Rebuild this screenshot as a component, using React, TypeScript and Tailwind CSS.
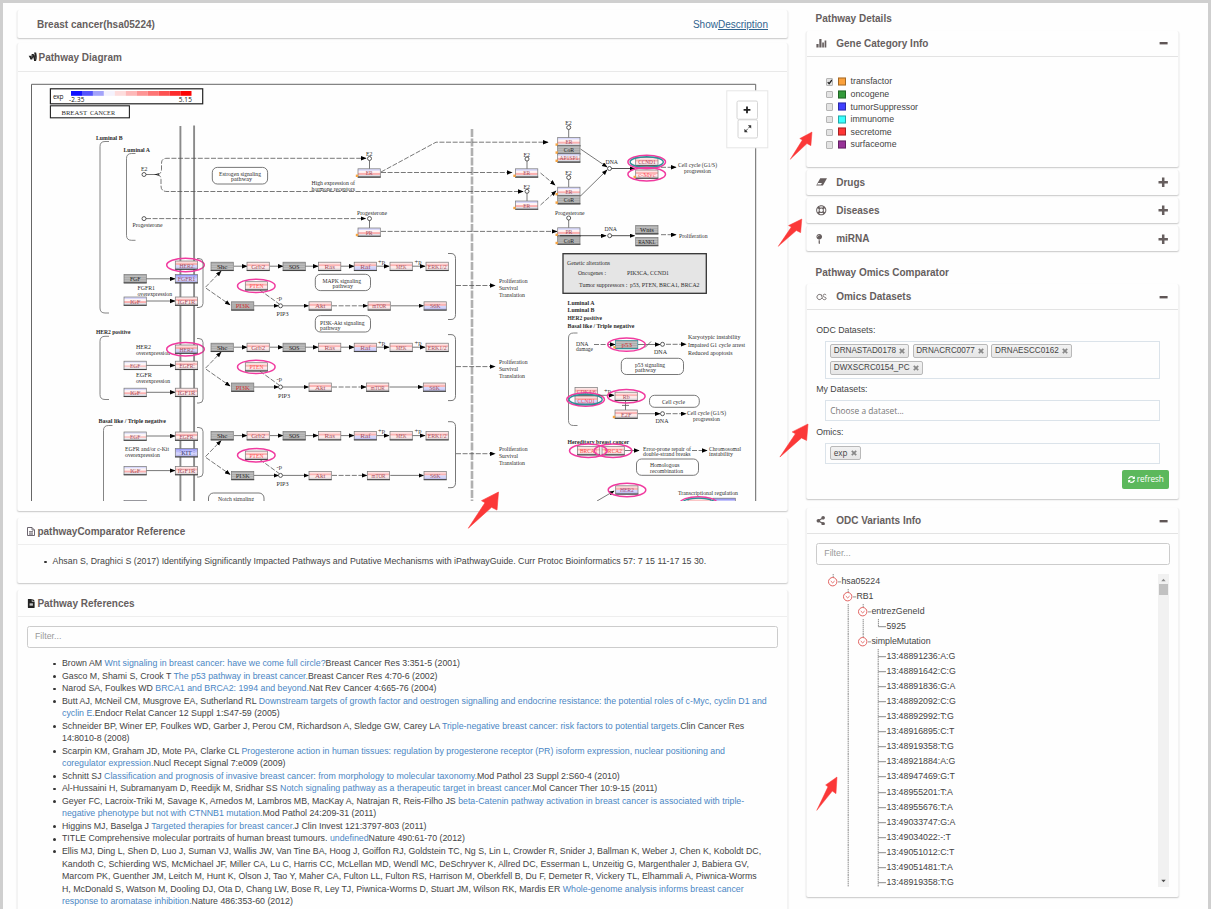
import React from "react";
import {
  FaGoogleWallet,
  FaRegLifeRing,
  FaMapPin,
  FaShareAlt,
  FaSyncAlt,
  FaFileAlt,
} from "react-icons/fa";

const SERIF = "Liberation Serif, serif";

/* ---------- diagram primitives ---------- */

type TProps = { x: number; x2: number; y: number; s: string; b?: boolean; c?: string; size?: number };
function T({ x, x2, y, s, b, c = "#2c2c2c", size = 6.5 }: TProps) {
  return (
    <text
      x={x}
      y={y}
      fontSize={size}
      fontFamily={SERIF}
      fontWeight={b ? 700 : 400}
      fill={c}
      textLength={x2 - x}
      lengthAdjust="spacingAndGlyphs"
    >
      {s}
    </text>
  );
}

type Kind = "red" | "mix" | "blue" | "gray" | "pale" | "low";
const BANDS: Record<Kind, [string, string, string, string]> = {
  red: ["#fde4e4", "#fbb4b4", "#ffe9e9", "#e2d8da"],
  mix: ["#d8d8fa", "#fff4f4", "#fbb0b0", "#dcdce4"],
  low: ["#fbdada", "#fab4b4", "#d4d4fb", "#c2c2ee"],
  blue: ["#9c9cf6", "#b9b9fb", "#d2d2fb", "#b8b8ec"],
  gray: ["#adadad", "#adadad", "#adadad", "#adadad"],
  pale: ["#e4e4f8", "#fdf6f6", "#fbc8c8", "#e8e8ee"],
};

type GProps = { x: number; y: number; s: string; k?: Kind; c?: string; dot?: boolean; edge?: string };
function G({ x, y, s, k = "red", c, dot, edge = "#777" }: GProps) {
  const bands = BANDS[k];
  const color = c || (k === "gray" ? "#222" : "#a35060");
  const w = Math.min(19, 3.5 * s.length);
  return (
    <g>
      {bands.map((f, i) => (
        <rect key={i} x={x} y={y + i * 2.05} width={22.3} height={2.1} fill={f} />
      ))}
      <rect x={x} y={y} width={22.3} height={8.2} fill="none" stroke={edge} strokeWidth={0.7} />
      <path d={`M${x - 0.3} ${y + 8.3}h23`} stroke={edge === "#777" ? "#444" : edge} strokeWidth={1.1} />
      {dot && <rect x={x - 2.2} y={y + 5.8} width={2.4} height={2.4} fill="#f7a440" />}
      {s && <T x={x + 11.2 - w / 2} x2={x + 11.2 + w / 2} y={y + 6.6} s={s} c={color} />}
    </g>
  );
}

function Ring({ x, y, teal }: { x: number; y: number; teal?: boolean }) {
  return (
    <g fill="none">
      <ellipse cx={x} cy={y} rx={18.8} ry={6.7} stroke="#f03a9f" strokeWidth={1.5} />
      {teal && <ellipse cx={x} cy={y} rx={16.6} ry={5.3} stroke="#2f8f97" strokeWidth={1.4} />}
    </g>
  );
}

function Dot({ x, y }: { x: number; y: number }) {
  return <circle cx={x} cy={y} r={2} fill="#fff" stroke="#333" strokeWidth={0.8} />;
}

type AProps = { p: string; d?: boolean; none?: boolean; c?: string };
function A({ p, d, none, c = "#555" }: AProps) {
  return (
    <path
      d={p}
      fill="none"
      stroke={c}
      strokeWidth={0.8}
      strokeDasharray={d ? "5 1.6" : undefined}
      markerEnd={none ? undefined : "url(#tip)"}
    />
  );
}

function Box({ x, y, x2, y2 }: { x: number; y: number; x2: number; y2: number }) {
  return <rect x={x} y={y} width={x2 - x} height={y2 - y} rx={5} fill="#fff" stroke="#555" strokeWidth={0.8} />;
}

function E2({ x, y, line }: { x: number; y: number; line: number }) {
  return (
    <g>
      <T x={x - 3.5} x2={x + 3} y={y - 2.5} s="E2" />
      <A p={`M${x} ${y + 2}V${line}`} none />
      <Dot x={x} y={y} />
    </g>
  );
}

type CascadeProps = { y: number; py: number; pip: number; tor: number; s6: number; mid: number; dark?: boolean };
function Cascade({ y, py, pip, tor, s6, mid, dark }: CascadeProps) {
  const cy = y + 4;
  const pc = py + 4;
  return (
    <g>
      <A p={`M205.5 ${y + 25}L221 ${y + 9}`} d />
      <A p={`M206 ${y + 26}L230 ${py + 3}`} d />
      <A p={`M234 ${cy}H247`} />
      <A p={`M270 ${cy}H283`} />
      <A p={`M305 ${cy}H318`} />
      <A p={`M341 ${cy}H354`} />
      <A p={`M377 ${cy}H389`} />
      <A p={`M412 ${cy}H425`} />
      <G x={211} y={y} s="Shc" k="gray" />
      <G x={247} y={y} s="Grb2" />
      <G x={283} y={y} s="SOS" k="gray" />
      <G x={318.5} y={y} s="Ras" />
      <G x={354.2} y={y} s="Raf" k="low" />
      <G x={390} y={y} s="MEK" />
      <G x={426} y={y} s="ERK1/2" />
      <T x={378} x2={385} y={y + 1.6} s="+p" />
      <T x={414.5} x2={421.5} y={y + 1.6} s="+p" />
      <A p={`M260 ${y + 28}L279 ${pc - 2}`} d none />
      <G x={245.3} y={y + 19.5} s="PTEN" c="#ff5050" />
      <Ring x={256.3} y={y + 23.7} />
      <T x={276.5} x2={282} y={pc - 6} s="-p" />
      <A p={`M254 ${pc}H278.5`} />
      <G x={231.5} y={py} s="PI3K" k="gray" c={dark ? "#333" : "#d03030"} />
      <Dot x={280.5} y={pc} />
      <T x={pip} x2={pip + 12} y={pc + 10.5} s="PIP3" />
      <A p={`M283 ${pc}H308.5`} />
      <G x={309} y={py} s="Akt" />
      <A p={`M332 ${pc}H${tor - 0.5}`} d />
      <G x={tor} y={py} s="mTOR" />
      <A p={`M${tor + 23} ${pc}H${s6 - 0.5}`} />
      <G x={s6} y={py} s="S6K" k="low" />
      <path
        d={`M448 ${mid - 32}h3q4.5 0 4.5 5v56q0 5 -4.5 5h-3`}
        fill="none"
        stroke="#555"
        strokeWidth={0.8}
      />
      <A p={`M456 ${mid}H495`} d />
      <T x={499} x2={527.5} y={mid - 3} s="Proliferation" />
      <T x={499} x2={518} y={mid + 4} s="Survival" />
      <T x={499} x2={525} y={mid + 11} s="Translation" />
    </g>
  );
}

function LBracket({ x, y1, y2 }: { x: number; y1: number; y2: number }) {
  return (
    <path
      d={`M${x + 9} ${y1}h-4q-5 0 -5 5V${y2 - 5}q0 5 5 5h4`}
      fill="none"
      stroke="#666"
      strokeWidth={0.8}
    />
  );
}
function RBracket({ y1, y2 }: { y1: number; y2: number }) {
  return (
    <path d={`M197 ${y1}h2q4 0 4 4V${y2 - 4}q0 4 -4 4h-2`} fill="none" stroke="#666" strokeWidth={0.8} />
  );
}

const SCALE = ["#1010ff", "#5454fb", "#a3a3fa", "#f4f2fd", "#fddcdc", "#fdb8b8", "#fd9494", "#fd7474", "#fd5252", "#fd2c2c", "#fb0606"];

function PathwayDiagram() {
  return (
    <svg className="block h-[429px] w-[770px]" viewBox="18 72 770 429">
      <defs>
        <marker id="tip" markerWidth="6" markerHeight="5" refX="5" refY="2.2" orient="auto" markerUnits="userSpaceOnUse">
          <path d="M0 0L5.6 2.2L0 4.4z" fill="#000" />
        </marker>
      </defs>

      <path d="M31.5 510V84.3H755.7V510" fill="none" stroke="#666" strokeWidth={1} />

      <rect x={50.4} y={88.8} width={152.3} height={15} fill="#fff" stroke="#222" strokeWidth={1.2} />
      {SCALE.map((c, i) => (
        <rect key={c} x={71 + i * 10.95} y={91} width={11} height={4.8} fill={c} />
      ))}
      <text x={53} y={98.5} fontSize={6.6} fontFamily="Open Sans, sans-serif" fill="#222" textLength={10.5}>exp</text>
      <text x={69} y={102.2} fontSize={6.4} fontFamily="Open Sans, sans-serif" fill="#111" textLength={15.5}>-2.35</text>
      <text x={178.8} y={102.2} fontSize={6.4} fontFamily="Open Sans, sans-serif" fill="#111" textLength={13}>5.15</text>
      <rect x={50.4} y={105.8} width={79} height={12} fill="#fff" stroke="#222" strokeWidth={1.1} />
      <T x={61.5} x2={87} y={115} s="BREAST" size={6.8} />
      <T x={90} x2={115} y={115} s="CANCER" size={6.8} />

      <path d="M180.4 126V501M194.1 125.5V501" stroke="#8a8a8a" strokeWidth={1.9} />
      <path d="M472 129V501" stroke="#b0b0b0" strokeWidth={2.6} strokeDasharray="8 1.5" />

      {/* luminal */}
      <T x={96} x2={122.5} y={139.6} s="Luminal B" b />
      <LBracket x={100} y1={141.5} y2={313} />
      <T x={123.5} x2={150} y={151.8} s="Luminal A" b />
      <LBracket x={126.5} y1={153.5} y2={240.3} />
      <T x={141} x2={147.5} y={171} s="E2" />
      <A p="M146 174.5H157" none />
      <path d="M154 174.5l5 -1.2v2.4z" fill="#222" />
      <A p="M157 174.5Q161.5 174.5 161.5 169V163Q161.5 158.3 167 158.3H366" d />
      <A p="M157 174.5Q161 174.5 161 180V186Q161 191.5 167 191.5H523" d />
      <Dot x={144} y={174.5} />
      <A p="M146 218.6H365.5" d />
      <Dot x={144} y={218.6} />
      <T x={132.5} x2={162.5} y={226.5} s="Progesterone" />
      <Box x={212.3} y={167.4} x2={267.6} y2={184} />
      <T x={219} x2={261} y={176} s="Estrogen signaling" />
      <T x={231} x2={252} y={181} s="pathway" />
      <T x={311.5} x2={355} y={185.2} s="High expression of" />
      <T x={311.5} x2={355} y={190.6} s="hormone receptors" />

      <E2 x={369.5} y={158.5} line={169} />
      <G x={358} y={168.8} s="ER" k="mix" dot />
      <T x={357} x2={387} y={215} s="Progesterone" />
      <A p="M369.5 220V228" none />
      <Dot x={369.5} y={218.6} />
      <G x={358} y={228} s="PR" k="mix" dot />
      <A p="M381 172L436 142.2H548" d />
      <A p="M381 172.5H512" d />
      <A p="M381 231.4H557" d />

      <E2 x={527} y={159} line={169} />
      <G x={515.5} y={168.8} s="ER" k="mix" dot />
      <E2 x={527} y={191.3} line={201} />
      <G x={515.5} y={201} s="ER" k="mix" dot />
      <A p="M540.5 173L555 185" d />
      <A p="M540.5 205L556 191" d />

      <E2 x={568.7} y={127.5} line={138} />
      <G x={557.7} y={137.6} s="ER" k="mix" dot />
      <G x={557.7} y={145.6} s="CoR" k="gray" dot />
      <G x={557.7} y={153.8} s="AP1SP1" k="mix" dot />
      <E2 x={568.7} y={177.5} line={187} />
      <G x={557.7} y={187.2} s="ER" k="mix" dot />
      <G x={557.7} y={195.6} s="CoR" k="gray" dot />
      <T x={555} x2={584.5} y={215} s="Progesterone" />
      <A p="M568.7 220V228" none />
      <Dot x={568.7} y={218} />
      <G x={557.7} y={227.8} s="PR" k="mix" dot />
      <G x={557.7} y={236} s="CoR" k="gray" dot />
      <A p="M580.5 149L607 167" />
      <A p="M580.5 196L607 170" />
      <T x={605.5} x2={618} y={163.5} s="DNA" />
      <A p="M611 168.5H634.5" c="#222" />
      <Dot x={609.5} y={168.5} />
      <G x={635.7} y={157.6} s="CCND1" c="#b03050" />
      <Ring x={646.7} y={162} teal />
      <G x={635.7} y={170} s="c-Myc" c="#ff5060" dot />
      <Ring x={646.7} y={174.2} />
      <A p="M661 167.3H676" d />
      <T x={678} x2={717} y={167.2} s="Cell cycle (G1/S)" />
      <T x={684} x2={711} y={172.6} s="progression" />

      <A p="M560 235.7H606" c="#222" />
      <A p="M611 235.7H634.5" c="#222" />
      <Dot x={609.7} y={235.7} />
      <T x={604.5} x2={617} y={230.6} s="DNA" />
      <G x={635.7} y={225.6} s="Wnts" k="gray" />
      <G x={635.7} y={237.4} s="RANKL" k="gray" />
      <A p="M661 234.7H676" d />
      <T x={679} x2={707.5} y={237.6} s="Proliferation" />

      {/* receptor groups */}
      <G x={175.3} y={261} s="HER2" k="low" />
      <Ring x={185.5} y={265} />
      <A p="M146 278.8H175" />
      <G x={124} y={274.6} s="FGF" k="gray" />
      <G x={175.3} y={274.6} s="FGFR1" k="blue" />
      <T x={137.5} x2={155} y={290.2} s="FGFR1" />
      <T x={137.5} x2={172} y={295.6} s="overexpression" />
      <A p="M146 301H175" />
      <G x={124} y={297} s="IGF" k="mix" />
      <G x={175.3} y={297} s="IGF1R" />
      <RBracket y1={258.5} y2={307.5} />

      <T x={96} x2={130.5} y={334} s="HER2 positive" b />
      <LBracket x={100} y1={336.3} y2={399.5} />
      <T x={136} x2={151} y={349} s="HER2" />
      <T x={136} x2={170} y={354.6} s="overexpression" />
      <G x={175.3} y={345} s="HER2" k="low" />
      <Ring x={185.5} y={349.2} />
      <A p="M146 365.4H175" />
      <G x={124} y={361.2} s="EGF" k="pale" />
      <G x={175.3} y={361.2} s="EGFR" />
      <T x={136} x2={152} y={377.4} s="EGFR" />
      <T x={136} x2={170} y={383} s="overexpression" />
      <A p="M146 392.3H175" />
      <G x={124} y={388.2} s="IGF" k="mix" />
      <G x={175.3} y={388.2} s="IGF1R" />
      <RBracket y1={338.5} y2={403} />

      <T x={98.5} x2={166} y={422.6} s="Basal like / Triple negative" b />
      <LBracket x={103.5} y1={425.5} y2={540} />
      <A p="M146 436H175" />
      <G x={124} y={432} s="EGF" k="pale" />
      <G x={175.3} y={432} s="EGFR" />
      <T x={125} x2={169} y={451} s="EGFR and/or c-Kit" />
      <T x={125} x2={160} y={456.8} s="overexpression" />
      <G x={175.3} y={448.6} s="KIT" k="blue" c="#333366" />
      <A p="M146 470.6H175" />
      <G x={124} y={466.5} s="IGF" k="mix" />
      <G x={175.3} y={466.5} s="IGF1R" />
      <RBracket y1={427.5} y2={477} />
      <G x={124} y={500.4} s="" k="mix" />
      <Box x={208.5} y={493} x2={264} y2={512} />
      <T x={218} x2={254} y={501.3} s="Notch signaling" />

      <Cascade y={262.2} py={301.8} pip={276.5} tor={368} s6={424} mid={285.5} />
      <Cascade y={343.2} py={383} pip={278} tor={366.5} s6={423.3} mid={366.6} />
      <Cascade y={431.6} py={471.4} pip={276.5} tor={367.3} s6={424} mid={453.7} dark />

      <Box x={315.3} y={274.3} x2={370.5} y2={290.6} />
      <T x={322.5} x2={361} y={282.8} s="MAPK signaling" />
      <T x={332.5} x2={353} y={288.2} s="pathway" />
      <Box x={315.3} y={315.6} x2={370.5} y2={332} />
      <T x={320} x2={364.5} y={324.6} s="PI3K-Akt signaling" />
      <T x={320} x2={340.5} y={330.2} s="pathway" />

      {/* alterations */}
      <rect x={563} y={253.7} width={143.3} height={39.6} fill="#e5e5e5" stroke="#333" strokeWidth={1.3} />
      <T x={567} x2={610} y={264.6} s="Genetic alterations" />
      <T x={578} x2={606} y={275} s="Oncogenes :" />
      <T x={627} x2={669} y={275} s="PIK3CA, CCND1" />
      <T x={579} x2={627.5} y={287} s="Tumor suppressors :" />
      <T x={630} x2={699.5} y={287} s="p53, PTEN, BRCA1, BRCA2" />

      <T x={567.5} x2={594.5} y={304.7} s="Luminal A" b />
      <T x={567.5} x2={594.5} y={311.8} s="Luminal B" b />
      <T x={567.5} x2={602} y={319.8} s="HER2 positive" b />
      <T x={567.5} x2={634.5} y={328} s="Basal like / Triple negative" b />
      <LBracket x={568.5} y1={333} y2={425.5} />
      <T x={576} x2={588.5} y={345.5} s="DNA" />
      <T x={576} x2={593} y={350.8} s="damage" />
      <A p="M594 344.5H615" d />
      <A p="M638 344.5H660" />
      <A p="M645 347.5L651 341.5" none />
      <G x={615.5} y={340.4} s="p53" k="gray" c="#d03030" dot edge="#2f8f97" />
      <Ring x={626.5} y={344.6} />
      <Dot x={662.5} y={344.3} />
      <A p="M666 344.3H686" d />
      <T x={654} x2={667} y={354} s="DNA" />
      <T x={688} x2={740.5} y={338.5} s="Karyotypic instability" />
      <T x={688} x2={745} y={346.6} s="Impaired G1 cycle arrest" />
      <T x={688} x2={732.5} y={354.8} s="Reduced apoptosis" />
      <Box x={621.3} y={358.3} x2={683.5} y2={374.5} />
      <T x={635} x2={665} y={366.6} s="p53 signaling" />
      <T x={635} x2={656} y={372} s="pathway" />

      <G x={575} y={387.6} s="CDK4/6" c="#d04050" />
      <G x={575} y={396} s="CCND1" c="#ff4050" k="low" />
      <Ring x={585.6} y={399.5} teal />
      <A p="M598 395.3H614" />
      <T x={604} x2={611} y={392.5} s="+p" />
      <A p="M625.5 401V410M622 405.4H629" none />
      <G x={615} y={392.2} s="Rb" />
      <Ring x={626.3} y={396.2} />
      <A p="M638 413.7H660" />
      <G x={615} y={410} s="E2F" dot />
      <Dot x={662.5} y={413.7} />
      <A p="M666 413.7H686" d />
      <T x={655.5} x2={668.5} y={423} s="DNA" />
      <Box x={649.5} y={395.3} x2={699.3} y2={407.3} />
      <T x={662} x2={685} y={403.5} s="Cell cycle" />
      <T x={687} x2={726} y={415.2} s="Cell cycle (G1/S)" />
      <T x={693} x2={720} y={420.6} s="progression" />

      <T x={567.5} x2={629} y={443.5} s="Hereditary breast cancer" b />
      <A p="M625 450.5H639" />
      <G x={577.5} y={446.6} s="BRCA1" c="#ff4040" />
      <G x={602} y={446.6} s="BRCA2" c="#ff4040" />
      <Ring x={588.3} y={450.7} />
      <Ring x={613} y={450.7} />
      <T x={643} x2={691} y={450.8} s="Error-prone repair of" />
      <T x={643} x2={690.5} y={456.4} s="double-strand breaks" />
      <A p="M692 450.5H707" d />
      <T x={709} x2={741} y={450.8} s="Chromosomal" />
      <T x={709} x2={733} y={456.4} s="instability" />
      <Box x={636.5} y={459} x2={698.5} y2={475.3} />
      <T x={650} x2={679.5} y={467.2} s="Homologous" />
      <T x={650} x2={683} y={472.8} s="recombination" />
      <A p="M597 501L614 491" />
      <G x={615.7} y={485.8} s="HER2" k="low" c="#a04080" />
      <Ring x={627} y={490} />
      <T x={678} x2={738} y={495.4} s="Transcriptional regulation" />
      <G x={713} y={498.2} s="" k="blue" />
      <G x={688} y={498.2} s="" />
      <Ring x={698.5} y={503.4} teal />

      {/* zoom controls */}
      <rect x={726.8} y={90.8} width={41} height={57} fill="#fff" stroke="#e6e6e6" />
      <rect x={737} y={101} width={20.5} height={18.2} rx={1.5} fill="#fff" stroke="#d4d4d4" />
      <rect x={738} y={119.8} width={19.5} height={18.2} rx={1.5} fill="#fff" stroke="#d4d4d4" />
      <path d="M743.6 109.8h6.8M747 106.4v6.8" stroke="#222" strokeWidth={1.8} />
      <path d="M745.4 131.2L750.4 126.2" stroke="#333" strokeWidth={1} strokeDasharray="2.9 1.2" />
      <path d="M747.8 125.2h3.4v3.4zM744.4 128.8v3.4h3.4z" fill="#333" />
    </svg>
  );
}

/* ---------- red pointers ---------- */

const POINTERS = [
  { x: 812, y: 132, sx: 0.72, sy: 0.77 },
  { x: 801.8, y: 219, sx: 0.78, sy: 0.77 },
  { x: 808, y: 424, sx: 0.93, sy: 0.93 },
  { x: 837, y: 777, sx: 0.67, sy: 0.94 },
  { x: 498.5, y: 492, sx: 1, sy: 1.02 },
];

function Pointers() {
  return (
    <svg className="pointer-events-none absolute top-0 left-0 h-[909px] w-[1211px]" viewBox="0 0 1211 909">
      {POINTERS.map((p, i) => (
        <path
          key={i}
          transform={`translate(${p.x} ${p.y}) scale(${p.sx} ${p.sy})`}
          d="M0 0L-17 8.5L-13.5 10.5L-30.2 35.5L-7 15L-1.5 17.7Z"
          fill="#fb3838"
          stroke="#fb3838"
          strokeWidth={0.6}
        />
      ))}
    </svg>
  );
}

/* ---------- cards ---------- */

const CARD = "rounded-[2px] border-x border-[#f3f3f3] bg-[#fefefe] shadow-[0_1px_1.5px_rgba(0,0,0,0.22)]";

function Link({ children }: { children: React.ReactNode }) {
  return <span className="text-[#4a86c4]">{children}</span>;
}

const REFS: [string, string, string][][] = [
  [["Brown AM ", "Wnt signaling in breast cancer: have we come full circle?", "Breast Cancer Res 3:351-5 (2001)"]],
  [["Gasco M, Shami S, Crook T ", "The p53 pathway in breast cancer.", "Breast Cancer Res 4:70-6 (2002)"]],
  [["Narod SA, Foulkes WD ", "BRCA1 and BRCA2: 1994 and beyond.", "Nat Rev Cancer 4:665-76 (2004)"]],
  [
    ["Butt AJ, McNeil CM, Musgrove EA, Sutherland RL ", "Downstream targets of growth factor and oestrogen signalling and endocrine resistance: the potential roles of c-Myc, cyclin D1 and", ""],
    ["", "cyclin E.", "Endocr Relat Cancer 12 Suppl 1:S47-59 (2005)"],
  ],
  [
    ["Schneider BP, Winer EP, Foulkes WD, Garber J, Perou CM, Richardson A, Sledge GW, Carey LA ", "Triple-negative breast cancer: risk factors to potential targets.", "Clin Cancer Res"],
    ["14:8010-8 (2008)", "", ""],
  ],
  [
    ["Scarpin KM, Graham JD, Mote PA, Clarke CL ", "Progesterone action in human tissues: regulation by progesterone receptor (PR) isoform expression, nuclear positioning and", ""],
    ["", "coregulator expression.", "Nucl Recept Signal 7:e009 (2009)"],
  ],
  [["Schnitt SJ ", "Classification and prognosis of invasive breast cancer: from morphology to molecular taxonomy.", "Mod Pathol 23 Suppl 2:S60-4 (2010)"]],
  [["Al-Hussaini H, Subramanyam D, Reedijk M, Sridhar SS ", "Notch signaling pathway as a therapeutic target in breast cancer.", "Mol Cancer Ther 10:9-15 (2011)"]],
  [
    ["Geyer FC, Lacroix-Triki M, Savage K, Arnedos M, Lambros MB, MacKay A, Natrajan R, Reis-Filho JS ", "beta-Catenin pathway activation in breast cancer is associated with triple-", ""],
    ["", "negative phenotype but not with CTNNB1 mutation.", "Mod Pathol 24:209-31 (2011)"],
  ],
  [["Higgins MJ, Baselga J ", "Targeted therapies for breast cancer.", "J Clin Invest 121:3797-803 (2011)"]],
  [["TITLE Comprehensive molecular portraits of human breast tumours. ", "undefined", "Nature 490:61-70 (2012)"]],
  [
    ["Ellis MJ, Ding L, Shen D, Luo J, Suman VJ, Wallis JW, Van Tine BA, Hoog J, Goiffon RJ, Goldstein TC, Ng S, Lin L, Crowder R, Snider J, Ballman K, Weber J, Chen K, Koboldt DC,", "", ""],
    ["Kandoth C, Schierding WS, McMichael JF, Miller CA, Lu C, Harris CC, McLellan MD, Wendl MC, DeSchryver K, Allred DC, Esserman L, Unzeitig G, Margenthaler J, Babiera GV,", "", ""],
    ["Marcom PK, Guenther JM, Leitch M, Hunt K, Olson J, Tao Y, Maher CA, Fulton LL, Fulton RS, Harrison M, Oberkfell B, Du F, Demeter R, Vickery TL, Elhammali A, Piwnica-Worms", "", ""],
    ["H, McDonald S, Watson M, Dooling DJ, Ota D, Chang LW, Bose R, Ley TJ, Piwnica-Worms D, Stuart JM, Wilson RK, Mardis ER ", "Whole-genome analysis informs breast cancer", ""],
    ["", "response to aromatase inhibition.", "Nature 486:353-60 (2012)"],
  ],
];

function Bullet() {
  return <span className="mt-[5.5px] mr-[6px] h-[2.6px] w-[2.6px] shrink-0 rounded-full bg-[#333]" />;
}

function LeftColumn() {
  return (
    <div className="flex w-[771px] shrink-0 flex-col">
      <div className={`${CARD} flex h-[28px] items-center justify-between pr-[19px] pl-[19px] text-[10px]`}>
        <h1 className="font-bold text-[#665e5e]">Breast cancer(hsa05224)</h1>
        <span className="text-[#31648f]">
          Show<span className="underline">Description</span>
        </span>
      </div>

      <section className={`${CARD} mt-[5px] h-[468px] overflow-hidden`}>
        <header className="flex h-[29px] items-center gap-[1.5px] border-b border-[#e9e9e9] pl-[9.5px] text-[10px] font-bold text-[#665e5e]">
          <FaGoogleWallet className="h-[9.5px] w-[9.5px] text-[#222]" />
          Pathway Diagram
        </header>
        <PathwayDiagram />
      </section>

      <section className={`${CARD} mt-[7px] h-[65px]`}>
        <header className="flex h-[27px] items-center gap-[2px] border-b border-[#eee] pl-[9.4px] text-[10px] font-bold text-[#665e5e]">
          <svg className="h-[9px] w-[8px]" viewBox="0 0 8 9">
            <path d="M0.5 0.5H5L7.5 3V8.5H0.5z" fill="#fff" stroke="#5c5560" strokeWidth={0.9} />
            <path d="M5 0.5V3H7.5" fill="none" stroke="#5c5560" strokeWidth={0.8} />
            <path d="M2 4.6h4M2 6h4M2 7.2h4" stroke="#5c5560" strokeWidth={0.8} />
          </svg>
          pathwayComparator Reference
        </header>
        <p className="flex pt-[10px] pl-[26px] leading-[12.6px] whitespace-nowrap">
          <Bullet />
          Ahsan S, Draghici S (2017) Identifying Significantly Impacted Pathways and Putative Mechanisms with iPathwayGuide. Curr Protoc Bioinformatics 57: 7 15 11-17 15 30.
        </p>
      </section>

      <section className={`${CARD} mt-[7px] h-[340px]`}>
        <header className="flex h-[27px] items-center gap-[2px] border-b border-[#eee] pl-[8.9px] text-[10px] font-bold text-[#665e5e]">
          <FaFileAlt className="h-[9px] w-[8.5px] text-[#222]" />
          Pathway References
        </header>
        <div className="mt-[9px] ml-[9px] flex h-[22px] w-[751px] items-center rounded-[2.5px] border border-[#ccc] pl-[7px] text-[#999]">
          Filter...
        </div>
        <ul className="mt-[9px] pl-[35.4px]">
          {REFS.map((lines, i) => (
            <li key={i} className="flex whitespace-nowrap">
              <Bullet />
              <div>
                {lines.map(([a, l, z], j) => (
                  <div key={j} className="h-[12.54px] leading-[12.54px] whitespace-pre">
                    {a}
                    <Link>{l}</Link>
                    {z}
                  </div>
                ))}
              </div>
            </li>
          ))}
        </ul>
      </section>
    </div>
  );
}

function PanelHead({ icon, title, open, line }: { icon: React.ReactNode; title: string; open?: boolean; line?: boolean }) {
  return (
    <header
      className={`flex h-[25.5px] shrink-0 items-center pr-[10px] pl-[9px] text-[10px] font-bold text-[#665e5e] ${
        line ? "border-b-[1.5px] border-[#e3e3e3]" : ""
      }`}
    >
      <span className="flex w-[20px] items-center">{icon}</span>
      <span className="flex-1">{title}</span>
      <svg className="h-[10px] w-[10px]" viewBox="0 0 10 10">
        {open ? (
          <path d="M1.6 5.2h8" stroke="#5f5656" strokeWidth={2.4} />
        ) : (
          <path d="M0.5 5.2h9.4M5.2 0.5v9.4" stroke="#665e5e" strokeWidth={2.5} />
        )}
      </svg>
    </header>
  );
}

const CATEGORIES = [
  { name: "transfactor", sw: "bg-[#fba13c]", on: true },
  { name: "oncogene", sw: "bg-[#339a3a]", on: false },
  { name: "tumorSuppressor", sw: "bg-[#4040ff]", on: false },
  { name: "immunome", sw: "bg-[#38ffff]", on: false },
  { name: "secretome", sw: "bg-[#ff3636]", on: false },
  { name: "surfaceome", sw: "bg-[#983298]", on: false },
];

function Tag({ children }: { children: React.ReactNode }) {
  return (
    <span className="flex h-[13.5px] items-center gap-[3.5px] rounded-[2px] border border-[#b9b9b9] bg-linear-to-b from-[#f2f2f2] to-[#e6e6e6] px-[2.6px] text-[8.15px] text-[#444]">
      {children}
      <svg className="h-[6px] w-[6px]" viewBox="0 0 6 6">
        <path d="M0.8 0.8L5.2 5.2M5.2 0.8L0.8 5.2" stroke="#888" strokeWidth={1.7} />
      </svg>
    </span>
  );
}

/* ---------- variants tree ---------- */

const VARIANTS = [
  "13:48891236:A:G", "13:48891642:C:G", "13:48891836:G:A", "13:48892092:C:G",
  "13:48892992:T:G", "13:48916895:C:T", "13:48919358:T:G", "13:48921884:A:G",
  "13:48947469:G:T", "13:48955201:T:A", "13:48955676:T:A", "13:49033747:G:A",
  "13:49034022:-:T", "13:49051012:C:T", "13:49051481:T:A", "13:48919358:T:G",
];

type Cell = "none" | "line" | "node" | "tee" | "elbow";
function Guide({ kind }: { kind: Cell }) {
  return (
    <svg className="block h-[15.05px] w-[15px] shrink-0 overflow-visible" viewBox="0 0 15 15.05">
      <g stroke="#8c8c8c" strokeWidth={1} strokeDasharray="1.4 0.6" fill="none">
        {(kind === "line" || kind === "tee") && <path d="M8.2 0V15.05" />}
        {kind === "node" && <path d="M8.2 0V4" />}
        {kind === "elbow" && <path d="M8.4 0V7.5" />}
        {(kind === "tee" || kind === "elbow") && <path d="M8.2 7.7H16" strokeDasharray="none" />}
      </g>
      {kind === "node" && (
        <g fill="none">
          <circle cx={7.7} cy={7.7} r={4.2} fill="#fff" stroke="#e0605e" strokeWidth={1} />
          <path d="M5.8 7.1L7.7 8.9L9.6 7.1" stroke="#e0605e" strokeWidth={0.9} />
          <path d="M13 7.9h3.2" stroke="#888" strokeWidth={0.9} />
        </g>
      )}
    </svg>
  );
}

function TreeRow({ cells, label }: { cells: Cell[]; label: string }) {
  return (
    <div className="flex h-[15.05px] items-center leading-[15.05px]">
      {cells.map((c, i) => (
        <Guide key={i} kind={c} />
      ))}
      <span className="pl-[1.8px]">{label}</span>
    </div>
  );
}

function RightColumn() {
  return (
    <div className="ml-[18.2px] flex w-[373px] shrink-0 flex-col">
      <h2 className="h-[21px] pl-[9.4px] text-[10px] leading-[17px] font-bold text-[#665e5e]">Pathway Details</h2>

      <section className={`${CARD} h-[136px]`}>
        <PanelHead
          icon={
            <svg className="h-[10px] w-[11px]" viewBox="0 0 11 10">
              <path d="M0.4 6h2.2v3.6H0.4zM3.3 1h2.2v8.6H3.3zM6.2 4.6h1.7v5H6.2zM8.6 2.4h1.7v7.2H8.6z" fill="#665e5e" />
            </svg>
          }
          title="Gene Category Info"
          open
          line
        />
        <ul className="pt-[19.3px] pl-[18.4px]">
          {CATEGORIES.map((c) => (
            <li key={c.name} className="flex h-[12.55px] items-center">
              <span className="mr-[4.5px] flex h-[7.5px] w-[7.5px] items-center justify-center rounded-[1px] border border-[#b5b5b5] bg-[#e3e3e3]">
                {c.on && (
                  <svg className="h-[6px] w-[6px]" viewBox="0 0 6 6">
                    <path d="M0.8 3.2L2.3 4.8L5.4 0.8" fill="none" stroke="#222" strokeWidth={1.4} />
                  </svg>
                )}
              </span>
              <span className={`mr-[5px] h-[8px] w-[8px] -translate-y-[0.5px] border border-black/35 ${c.sw}`} />
              {c.name}
            </li>
          ))}
        </ul>
      </section>

      <section className={`${CARD} mt-[2.5px] h-[25.5px]`}>
        <PanelHead
          icon={
            <svg className="h-[8px] w-[11px]" viewBox="0 0 11 8">
              <path d="M4.2 0.3H11L6.9 7.4H0.2z" fill="#665e5e" />
              <path d="M2.1 4.9h3.9L4.9 6.6H1.2z" fill="#fff" />
            </svg>
          }
          title="Drugs"
        />
      </section>
      <section className={`${CARD} mt-[2.7px] h-[25.5px]`}>
        <PanelHead icon={<FaRegLifeRing className="h-[10.5px] w-[10.5px]" />} title="Diseases" />
      </section>
      <section className={`${CARD} mt-[2.7px] h-[25.5px]`}>
        <PanelHead icon={<FaMapPin className="h-[10px] w-[6.5px]" />} title="miRNA" />
      </section>

      <h2 className="h-[33px] pt-[12.5px] pl-[9.4px] text-[10px] leading-[18px] font-bold text-[#665e5e]">Pathway Omics Comparator</h2>

      <section className={`${CARD} h-[215px]`}>
        <PanelHead
          icon={
            <svg className="h-[8px] w-[11px]" viewBox="0 0 11 8">
              <path
                d="M4.9 1.8A2.6 2.6 0 1 0 4.9 6.2L5.9 5M5 1.2L6.6 5.6Q7.2 6.7 8.4 6.7Q10.1 6.6 10.1 5.3Q10 4.3 8.5 4.1Q7 3.8 7.1 2.6Q7.3 1.2 8.6 1.2Q9.8 1.2 10 2.2"
                fill="none"
                stroke="#665e5e"
                strokeWidth={0.85}
              />
            </svg>
          }
          title="Omics Datasets"
          open
          line
        />
        <div className="flex flex-col pl-[9px]">
          <span className="mt-[14px] h-[12px] leading-[12px]">ODC Datasets:</span>
          <div className="mt-[5px] ml-[9px] flex h-[38px] w-[335px] flex-wrap content-start gap-x-[3.5px] gap-y-[3.5px] border border-[#dbe3ea] pt-[2.6px] pl-[4px]">
            <Tag>DRNASTAD0178</Tag>
            <Tag>DRNACRC0077</Tag>
            <Tag>DRNAESCC0162</Tag>
            <Tag>DWXSCRC0154_PC</Tag>
          </div>
          <span className="mt-[4.5px] h-[12px] leading-[12px]">My Datasets:</span>
          <div className="mt-[5px] ml-[9px] flex h-[21px] w-[335px] items-center border border-[#dbe3ea] pl-[4px] font-['Open_Sans',sans-serif] text-[8.35px] text-[#777]">
            Choose a dataset...
          </div>
          <span className="mt-[4.3px] h-[12px] leading-[12px]">Omics:</span>
          <div className="mt-[5px] ml-[9px] flex h-[21px] w-[335px] items-center border border-[#dbe3ea] pl-[4px] font-['Open_Sans',sans-serif]">
            <Tag>exp</Tag>
          </div>
          <button className="mt-[6px] mr-[9px] flex h-[19px] w-[47px] items-center justify-center gap-[2px] self-end rounded-[2px] bg-[#5cb85c] font-['Open_Sans',sans-serif] text-[8.2px] tracking-[-0.1px] text-white">
            <FaSyncAlt className="h-[7px] w-[7px]" />
            refresh
          </button>
        </div>
      </section>

      <section className={`${CARD} mt-[9px] h-[389px]`}>
        <PanelHead icon={<FaShareAlt className="h-[9.5px] w-[9.5px]" />} title="ODC Variants Info" open line />
        <div className="mt-[9px] ml-[8.6px] flex h-[22px] w-[354px] items-center rounded-[2.5px] border border-[#ccc] pl-[7.5px] text-[#999]">
          Filter...
        </div>
        <div className="mt-[9px] flex h-[313.5px] w-[362px] justify-between overflow-hidden pl-[17.4px]">
          <div>
            <TreeRow cells={["node"]} label="hsa05224" />
            <TreeRow cells={["none", "node"]} label="RB1" />
            <TreeRow cells={["none", "line", "node"]} label="entrezGeneId" />
            <TreeRow cells={["none", "line", "line", "elbow"]} label="5925" />
            <TreeRow cells={["none", "line", "node"]} label="simpleMutation" />
            {VARIANTS.map((v, i) => (
              <TreeRow key={i} cells={["none", "line", "none", "tee"]} label={v} />
            ))}
          </div>
          <div className="flex w-[11px] flex-col items-center bg-[#f1f1f1]">
            <svg className="mt-[4px] h-[4px] w-[5px]" viewBox="0 0 5 4">
              <path d="M0.3 3.3L2.5 0.8L4.7 3.3z" fill="#8d8d8d" />
            </svg>
            <div className="mt-[2.5px] h-[11px] w-[9px] bg-[#c1c1c1]" />
            <svg className="mt-auto mb-[4px] h-[4px] w-[5px]" viewBox="0 0 5 4">
              <path d="M0.3 0.7L2.5 3.2L4.7 0.7z" fill="#505050" />
            </svg>
          </div>
        </div>
      </section>
    </div>
  );
}

export default function App() {
  return (
    <div className="relative h-[909px] w-[1211px] overflow-hidden border-t-[3px] border-r-[3px] border-l-[3px] border-[#cfcfcf] bg-[#fefefe] font-['Liberation_Sans',Arial,sans-serif] text-[8.81px] text-[#444]">
      <div className="flex pt-[7px] pl-[14px]">
        <LeftColumn />
        <RightColumn />
      </div>
      <div className="absolute -top-[3px] -left-[3px]">
        <Pointers />
      </div>
    </div>
  );
}
